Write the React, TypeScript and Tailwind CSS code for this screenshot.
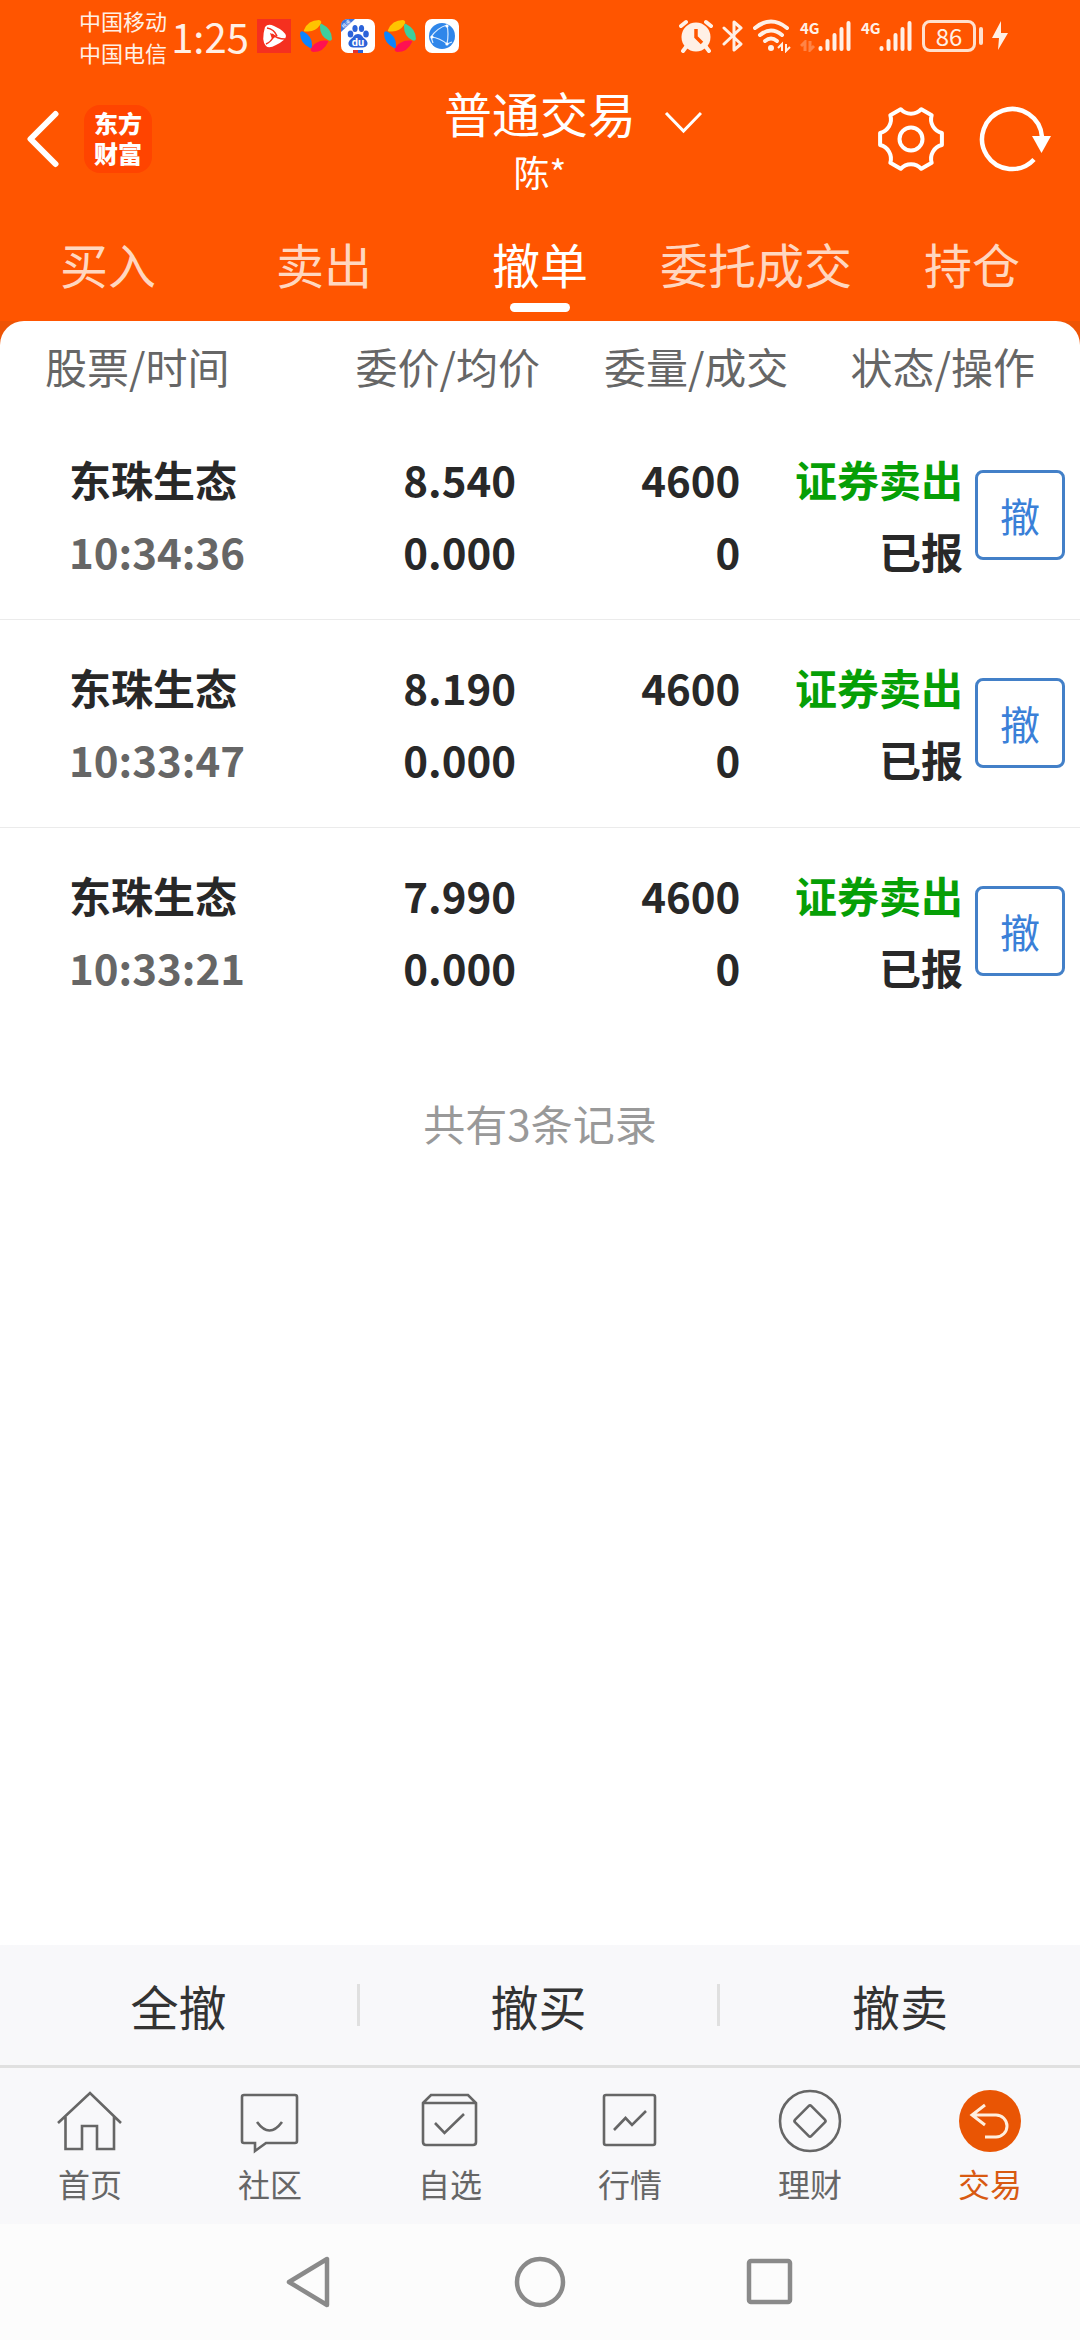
import type { ReactNode } from "react";

type Order = { name: string; time: string; price: string; avg: string; qty: string; done: string };

const orders: Order[] = [
  { name: "东珠生态", time: "10:34:36", price: "8.540", avg: "0.000", qty: "4600", done: "0" },
  { name: "东珠生态", time: "10:33:47", price: "8.190", avg: "0.000", qty: "4600", done: "0" },
  { name: "东珠生态", time: "10:33:21", price: "7.990", avg: "0.000", qty: "4600", done: "0" },
];

const tabs = ["买入", "卖出", "撤单", "委托成交", "持仓"];
const bulkActions = ["全撤", "撤买", "撤卖"];

function VideoAppIcon() {
  return (
    <svg width="34" height="34" viewBox="0 0 34 34" aria-hidden="true">
      <rect width="34" height="34" fill="#f5301f" />
      <path d="M8 8 Q11 4 17 7 Q28 12 29 17 Q29 21 19 26 Q12 30 9 27 Q4 22 8 8 Z" fill="#fff" />
      <path d="M10 9 Q17 10 20 17 M28 20 Q20 20 15 15 M9 25 Q14 23 17 17" fill="none" stroke="#f5301f" strokeWidth="1.5" />
      <path d="M13 14 L20 17 L15 20 Z" fill="#f5301f" />
    </svg>
  );
}

function PinwheelIcon() {
  return (
    <svg width="32" height="34" viewBox="0 0 32 34" aria-hidden="true">
      <path d="M4 11 Q8 1 19 1 Q23 2 20 6 Q16 12 8 12.500 Q3 13 4 11 Z" fill="#ffc400" />
      <path d="M22 5 Q32 10 32 20 Q31 23 28 21 Q20 17 20 8 Q20 4 22 5 Z" fill="#3ecf9c" />
      <path d="M28 23 Q24 33 13 33 Q9 32 12 28 Q16 22 24 21.500 Q29 21 28 23 Z" fill="#ff1150" />
      <path d="M10 29 Q0 24 0 14 Q1 11 4 13 Q12 17 12 26 Q12 30 10 29 Z" fill="#0a84ff" />
    </svg>
  );
}

function BaiduIcon() {
  return (
    <svg width="34" height="34" viewBox="0 0 34 34" aria-hidden="true">
      <rect width="34" height="34" rx="7" fill="#fff" />
      <path d="M7 0 H14 L0 13 V7 Q0 0 7 0 Z" fill="#3d74dc" />
      <text x="5" y="7" textAnchor="middle" transform="rotate(-43 5 5)" fontSize="5" fill="#fff">极速</text>
      <g fill="#2a62d9">
        <ellipse cx="9.500" cy="15" rx="2.800" ry="3.500" />
        <ellipse cx="14" cy="9.500" rx="2.600" ry="3.600" />
        <ellipse cx="20.500" cy="9.500" rx="2.600" ry="3.600" />
        <ellipse cx="25" cy="15" rx="2.800" ry="3.500" />
        <path d="M17 15 C21 15 21 18 24 20 C29 24 26 29 21 28.500 H13 C8 29 5 24 10 20 C13 18 13 15 17 15 Z" />
      </g>
      <text x="17" y="27" textAnchor="middle" fontSize="11" fontWeight="700" fill="#fff" fontFamily="Roboto, sans-serif">du</text>
      <rect x="12" y="31" width="5" height="3" fill="#e3342f" />
      <rect x="17" y="31" width="5" height="3" fill="#2a62d9" />
    </svg>
  );
}

function GlobeAppIcon() {
  return (
    <svg width="34" height="34" viewBox="0 0 34 34" aria-hidden="true">
      <rect width="34" height="34" rx="7" fill="#fff" />
      <circle cx="17" cy="17" r="13" fill="#2f86ea" />
      <g fill="none" stroke="#d9ebff" strokeWidth="1.200">
        <path d="M22 6 Q12 9 6 18 M22 6 Q24 15 22 25 M6 18 Q15 19 22 25 M22 25 L27 23 M6 18 L8 24" />
      </g>
      <g fill="#fff">
        <circle cx="22" cy="7" r="1.600" />
        <circle cx="7" cy="18" r="1.600" />
        <circle cx="22" cy="25" r="1.600" />
      </g>
    </svg>
  );
}

function AlarmIcon() {
  return (
    <svg width="34" height="34" viewBox="0 0 34 34" aria-hidden="true">
      <circle cx="17" cy="18" r="14.500" fill="#fff0e6" />
      <path d="M2 7 L7 3 M32 7 L27 3 M7 28 L4 32 M27 28 L30 32" stroke="#fff0e6" strokeWidth="4" strokeLinecap="round" />
      <path d="M17 10 V18 L23 24" fill="none" stroke="#ff5500" strokeWidth="3.500" />
    </svg>
  );
}

function BluetoothIcon() {
  return (
    <svg width="22" height="34" viewBox="0 0 22 34" aria-hidden="true">
      <path d="M2 9 L19 25 L12 31 V3 L19 9 L2 25" fill="none" stroke="#fff0e6" strokeWidth="3" strokeLinecap="round" strokeLinejoin="round" />
    </svg>
  );
}

function WifiIcon() {
  return (
    <svg width="38" height="34" viewBox="0 0 38 34" aria-hidden="true">
      <g fill="none" stroke="#fff0e6" strokeWidth="4" strokeLinecap="round">
        <path d="M2 9 Q18 -4 34 9" />
        <path d="M7 16 Q18 7 29 16" />
        <path d="M12 22 Q18 17 24 22" />
      </g>
      <circle cx="18" cy="29" r="3" fill="#fff0e6" />
      <path d="M29 32 V25 L25 29 M33 25 V32 L37 28" fill="none" stroke="#fff0e6" strokeWidth="2" />
    </svg>
  );
}

function Signal({ data }: { data?: boolean }) {
  return (
    <div className="flex items-end">
      <div className="flex h-8 w-[18px] flex-col justify-between">
        <span className="text-[15px] leading-4 font-bold text-[#fff0e6]">4G</span>
        <svg className={data ? "opacity-30" : "opacity-0"} width="16" height="12" viewBox="0 0 16 12" aria-hidden="true">
          <path d="M5 11 V2 L1 6 M10 1 V10 L14 6" fill="none" stroke="#fff0e6" strokeWidth="3" />
        </svg>
      </div>
      <svg width="34" height="32" viewBox="0 0 34 32" aria-hidden="true">
        <g stroke="#fff0e6" strokeWidth="4" strokeLinecap="round">
          <path d="M2.500 28 V29 M9.500 21 V29 M16.500 15 V29 M23.500 9 V29 M30.500 3 V29" />
        </g>
      </svg>
    </div>
  );
}

function StatusBar() {
  return (
    <div className="flex h-[72px] items-center justify-between pr-[72px] pl-[79px] text-[#fff0e6]">
      <div className="flex items-center">
        <div className="flex flex-col text-[22px] leading-8">
          <span>中国移动</span>
          <span>中国电信</span>
        </div>
        <span className="w-[86px] text-center text-[40px] leading-[68px]">1:25</span>
        <div className="ml-1 flex items-center gap-[9px]">
          <VideoAppIcon />
          <PinwheelIcon />
          <BaiduIcon />
          <PinwheelIcon />
          <GlobeAppIcon />
        </div>
      </div>
      <div className="flex items-center gap-[9px]">
        <AlarmIcon />
        <BluetoothIcon />
        <WifiIcon />
        <Signal data />
        <Signal />
        <div className="flex items-center gap-[3px]">
          <span className="flex h-8 w-[54px] items-center justify-center rounded-[8px] border-3 border-[#ffe0cc] text-[24px] leading-6">86</span>
          <span className="h-[18px] w-1 rounded-sm bg-[#ffe0cc]" />
        </div>
        <svg width="16" height="30" viewBox="0 0 16 30" aria-hidden="true">
          <path d="M9 0 L0 17 H7 L6 29 L16 12 H9 Z" fill="#fff0e6" />
        </svg>
      </div>
    </div>
  );
}

function Header() {
  return (
    <header className="grid h-[134px] grid-cols-[1fr_auto_1fr] items-center">
      <div className="flex items-center gap-6 pl-[26px]">
        <button type="button" aria-label="返回">
          <svg width="34" height="58" viewBox="0 0 34 58" aria-hidden="true">
            <path d="M29.500 4 L4.500 29 L29.500 54" fill="none" stroke="#fff" strokeWidth="6" strokeLinecap="round" strokeLinejoin="round" />
          </svg>
        </button>
        <div className="flex h-[68px] w-[68px] items-start justify-center rounded-2xl bg-[#ff4400] pt-[3px] text-[24px] leading-[30px] font-black text-white">
          <span className="w-12">东方财富</span>
        </div>
      </div>
      <button type="button" className="relative flex flex-col items-center pb-[3px] text-white">
        <span className="text-[48px] leading-[66px]">普通交易</span>
        <span className="text-[36px] leading-[52px]">陈*</span>
        <svg className="absolute top-8 left-full ml-7" width="38" height="24" viewBox="0 0 38 24" aria-hidden="true">
          <path d="M2 2 L19.500 20 L37 2" fill="none" stroke="#fff" strokeWidth="3" />
        </svg>
      </button>
      <div className="flex items-center justify-end gap-[34px] pr-[27px]">
        <button type="button" aria-label="设置">
          <svg width="68" height="68" viewBox="-34 -34 68 68" aria-hidden="true">
            <g fill="none" stroke="#fff" strokeWidth="4" strokeLinejoin="round">
              <path d="M30.900 6 A14 14 0 0 0 20.700 23.800 L10.300 29.800 A14 14 0 0 0 -10.300 29.800 L-20.700 23.800 A14 14 0 0 0 -30.900 6 V-6 A14 14 0 0 0 -20.700 -23.800 L-10.300 -29.800 A14 14 0 0 0 10.300 -29.800 L20.700 -23.800 A14 14 0 0 0 30.900 -6 Z" />
              <circle r="11.500" />
            </g>
          </svg>
        </button>
        <button type="button" aria-label="刷新">
          <svg width="74" height="68" viewBox="-33 -34 74 68" aria-hidden="true">
            <path d="M22 20.500 A30 30 0 1 1 30 -2" fill="none" stroke="#fff" strokeWidth="4.500" />
            <path d="M20 -3 H39 L29.500 14 Z" fill="#fff" />
          </svg>
        </button>
      </div>
    </header>
  );
}

function NavIcon({ children }: { children: ReactNode }) {
  return (
    <svg width="66" height="66" viewBox="0 0 66 66" fill="none" stroke="#666" strokeWidth="2.600" aria-hidden="true">
      {children}
    </svg>
  );
}

const navItems: { label: string; icon: ReactNode }[] = [
  {
    label: "首页",
    icon: <path d="M1 35 L33 5 L64 35 M8.500 29 V61 H25 V38 H40 V61 H57 V29" />,
  },
  {
    label: "社区",
    icon: (
      <>
        <path d="M7 7 H58 Q60 7 60 9 V53 Q60 55 58 55 H29 L18 63 V55 H7 Q5 55 5 53 V9 Q5 7 7 7 Z" />
        <path d="M20 34 Q32.500 51 45 34" />
      </>
    ),
  },
  {
    label: "自选",
    icon: (
      <>
        <path d="M6 15 L14 7 H51 L59 15 V54 Q59 57 56 57 H9 Q6 57 6 54 Z M6 15 H59" />
        <path d="M18 35 L27.500 45 L47 26" />
      </>
    ),
  },
  {
    label: "行情",
    icon: (
      <>
        <rect x="7" y="7" width="51" height="50" rx="2" />
        <path d="M17 42 L28.500 30 L35 37 L49 23" />
      </>
    ),
  },
  {
    label: "理财",
    icon: (
      <>
        <circle cx="33" cy="33" r="30" />
        <rect x="21.500" y="21.500" width="23" height="23" rx="2" transform="rotate(45 33 33)" />
      </>
    ),
  },
  {
    label: "交易",
    icon: (
      <>
        <circle cx="33" cy="33" r="31" fill="#e95504" stroke="none" />
        <path d="M28 17 L15 27 L28 37 M15 27 H39 A11 11 0 0 1 39 49 H28" stroke="#ffeedd" strokeWidth="3" />
      </>
    ),
  },
];

export default function App() {
  return (
    <div className="flex min-h-screen flex-col bg-white font-['Noto_Sans_CJK_SC',sans-serif]">
      <div className="bg-[#ff5500]">
        <StatusBar />
        <Header />
        <nav className="grid h-[115px] grid-cols-5">
          {tabs.map((tab) => (
            <a
              key={tab}
              href="#"
              aria-current={tab === "撤单" ? "page" : undefined}
              className={
                tab === "撤单"
                  ? "flex flex-col items-center pt-6 text-white"
                  : "flex flex-col items-center pt-6 text-[#ffd7c0]"
              }
            >
              <span className="text-[48px] leading-[66px] whitespace-nowrap">{tab}</span>
              {tab === "撤单" && <span className="mt-[7px] h-[9px] w-[60px] rounded-full bg-white" />}
            </a>
          ))}
        </nav>
      </div>

      <main className="flex flex-1 flex-col bg-[#ee5405]">
        <div className="flex-1 rounded-t-3xl bg-white">
          <table className="w-full table-fixed text-[42px]">
            <colgroup>
              <col className="w-[27%]" />
              <col className="w-[23%]" />
              <col className="w-[23%]" />
              <col className="w-[27%]" />
            </colgroup>
            <thead>
              <tr className="h-[90px] text-right leading-[90px] whitespace-nowrap text-[#666]">
                <th className="pl-[45px] text-left font-normal">股票/时间</th>
                <th className="font-normal">委价/均价</th>
                <th className="font-normal">委量/成交</th>
                <th className="pr-[45px] font-normal">状态/操作</th>
              </tr>
            </thead>
            <tbody>
              {orders.map((o) => (
                <tr key={o.time} className="h-52 border-b border-[#ebebeb] leading-[72px] font-bold whitespace-nowrap text-[#282828] last:border-b-0">
                  <td className="pl-[69px]">
                    <div>{o.name}</div>
                    <div className="text-[#666]">{o.time}</div>
                  </td>
                  <td className="pr-6 text-right">
                    <div>{o.price}</div>
                    <div>{o.avg}</div>
                  </td>
                  <td className="pr-12 text-right">
                    <div>{o.qty}</div>
                    <div>{o.done}</div>
                  </td>
                  <td className="pr-[15px]">
                    <div className="flex items-center justify-end gap-3">
                      <div className="text-right">
                        <div className="text-[#069f06]">证券卖出</div>
                        <div>已报</div>
                      </div>
                      <button
                        type="button"
                        className="h-[90px] w-[90px] rounded-lg border-3 border-[#4380c8] text-[40px] leading-[82px] font-normal text-[#3a80d8]"
                      >
                        撤
                      </button>
                    </div>
                  </td>
                </tr>
              ))}
            </tbody>
          </table>
          <p className="pt-[58px] text-center text-[42px] leading-[60px] text-[#999]">共有3条记录</p>
        </div>
      </main>

      <div className="grid h-30 grid-cols-3 items-center bg-[#f8f8fa]">
        {bulkActions.map((label) => (
          <button
            key={label}
            type="button"
            className="h-[42px] border-r-3 border-[#e0e0e0] text-[48px] leading-[38px] text-[#333] last:border-r-0"
          >
            {label}
          </button>
        ))}
      </div>

      <nav className="grid h-[159px] grid-cols-6 border-t-3 border-[#e0e0e0] bg-[#f8f8fa]">
        {navItems.map(({ label, icon }) => (
          <a
            key={label}
            href="#"
            className={
              label === "交易"
                ? "flex flex-col items-center pt-5 text-[#d85a12]"
                : "flex flex-col items-center pt-5 text-[#666]"
            }
          >
            <NavIcon>{icon}</NavIcon>
            <span className="mt-[6px] text-[32px] leading-[46px]">{label}</span>
          </a>
        ))}
      </nav>

      <div className="flex h-29 items-center justify-center gap-[178px] bg-[#fcfcfc]">
        <button type="button" aria-label="后退">
          <svg width="52" height="52" viewBox="0 0 52 52" aria-hidden="true">
            <path d="M43 3 V49 L5 26 Z" fill="none" stroke="#8a8a8a" strokeWidth="4.500" strokeLinejoin="round" />
          </svg>
        </button>
        <button type="button" aria-label="主屏幕">
          <svg width="52" height="52" viewBox="0 0 52 52" aria-hidden="true">
            <circle cx="26" cy="26" r="23" fill="none" stroke="#8a8a8a" strokeWidth="4.500" />
          </svg>
        </button>
        <button type="button" aria-label="最近任务">
          <svg width="52" height="52" viewBox="0 0 52 52" aria-hidden="true">
            <rect x="5" y="5" width="41" height="41" rx="2" fill="none" stroke="#8a8a8a" strokeWidth="4.500" />
          </svg>
        </button>
      </div>
    </div>
  );
}
